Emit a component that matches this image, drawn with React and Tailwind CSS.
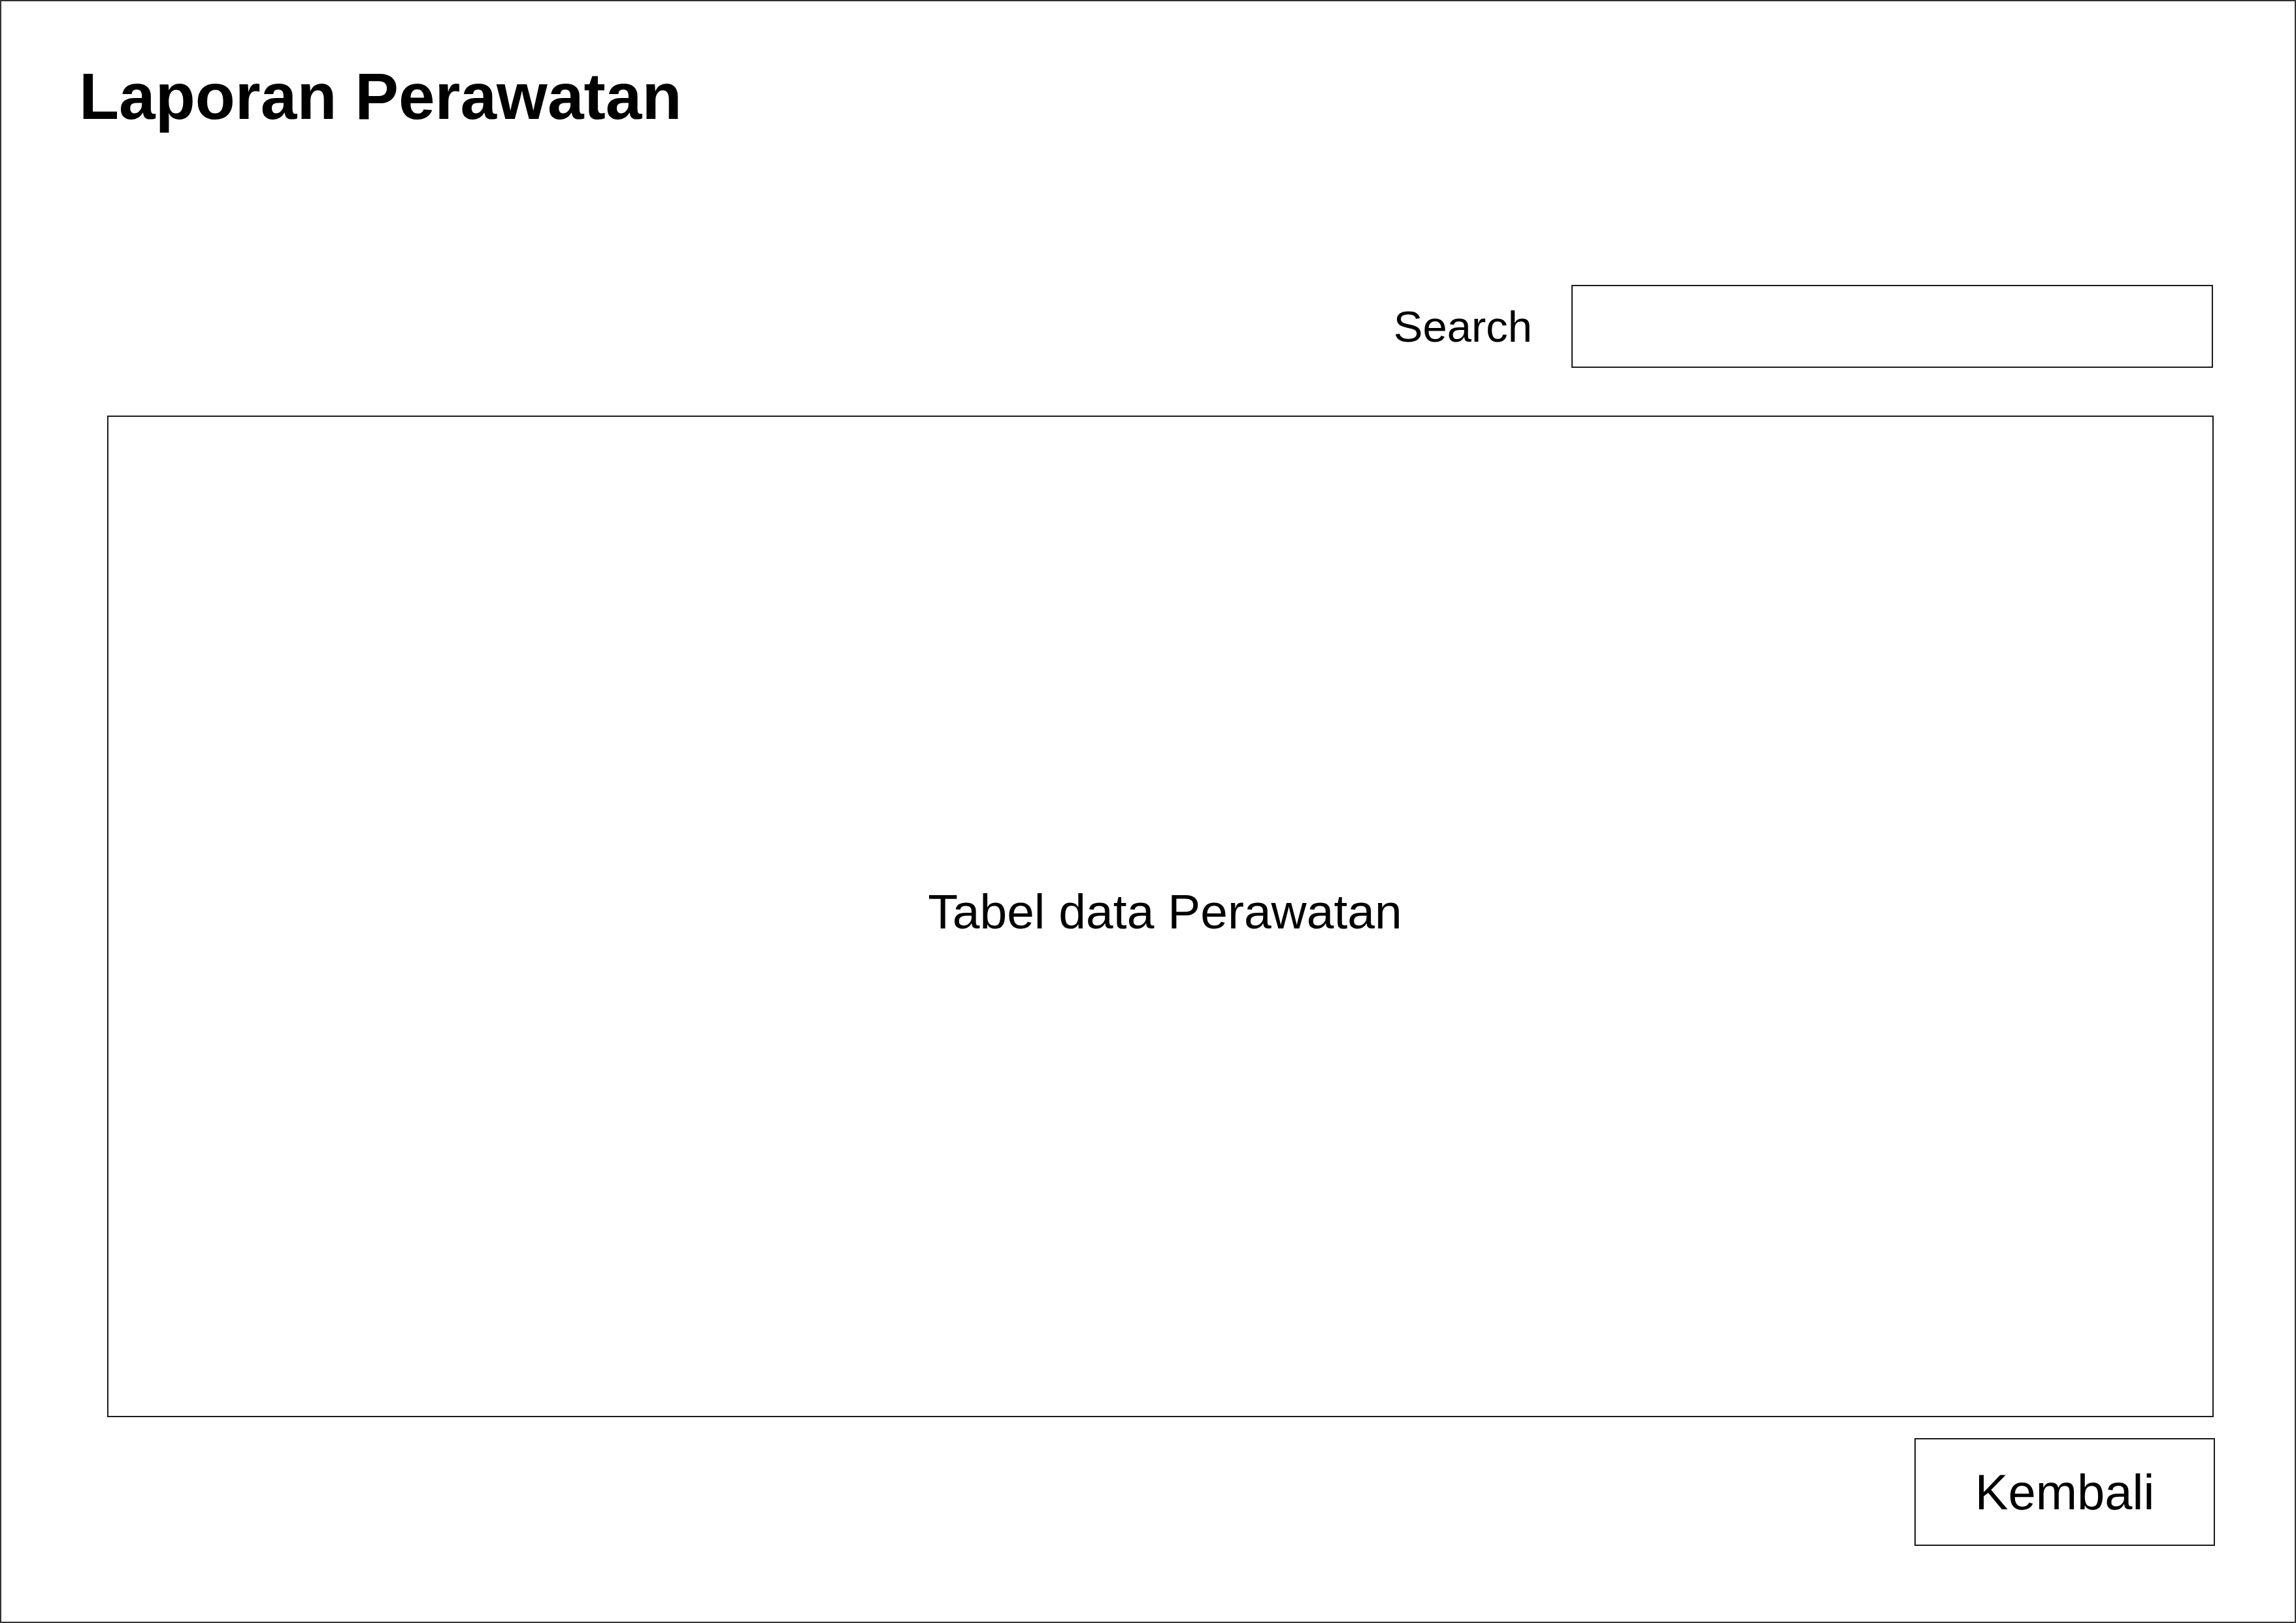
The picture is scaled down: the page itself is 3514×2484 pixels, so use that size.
export default function App() {
  return (
    <div className="h-[2484px] w-[3514px] border-2 border-[#333] bg-white font-['Liberation_Sans',Arial,sans-serif] text-black">
      {/* Judul */}
      <h1 className="ml-[119px] mt-[95px] text-[100px] font-bold leading-none">Laporan Perawatan</h1>

      <div className="ml-[162px] w-[3226px]">
        {/* Pencarian */}
        <div className="mr-[3px] mt-[239px] flex items-center justify-end gap-[60px]">
          <label className="text-[67px] leading-none">Search</label>
          <input
            type="text"
            className="h-[127px] w-[982px] border-2 border-[#1a1a1a] bg-white px-4 text-[60px] outline-none"
          />
        </div>

        {/* Tabel */}
        <div className="mt-[73px] flex h-[1533px] w-[3224px] items-center justify-center border-2 border-[#1a1a1a] pb-[14px] pl-[14px]">
          <span className="text-[75px] leading-none">Tabel data Perawatan</span>
        </div>

        <div className="mt-[32px] flex justify-end">
          <button className="flex h-[165px] w-[460px] items-center justify-center border-2 border-[#1a1a1a] bg-white text-[76px] leading-none">
            Kembali
          </button>
        </div>
      </div>
    </div>
  )
}
